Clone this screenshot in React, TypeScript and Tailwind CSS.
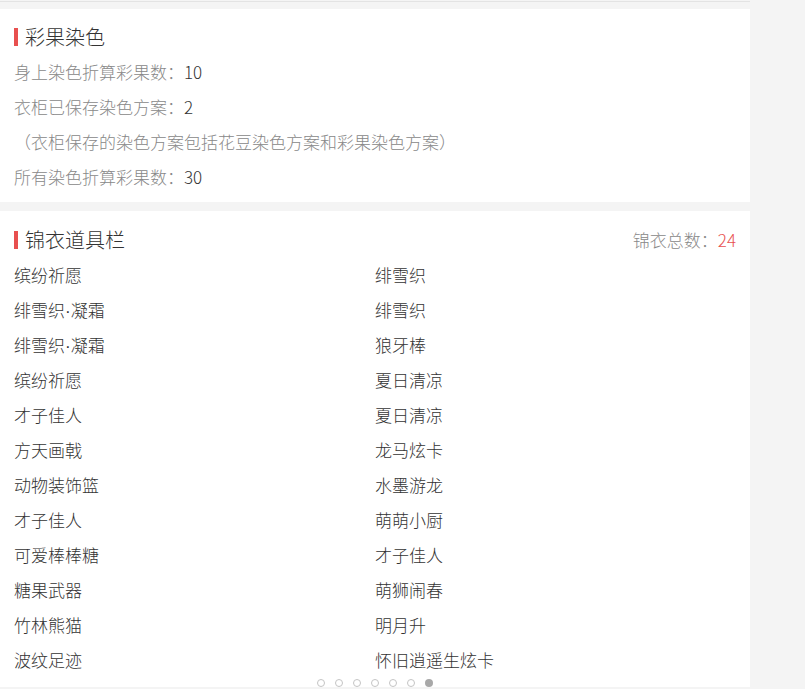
import React from "react";

const font = {
  fontFamily: '"Microsoft YaHei", "Noto Sans CJK SC", "Noto Sans", sans-serif',
};

const leftItems = [
  "缤纷祈愿",
  "绯雪织·凝霜",
  "绯雪织·凝霜",
  "缤纷祈愿",
  "才子佳人",
  "方天画戟",
  "动物装饰篮",
  "才子佳人",
  "可爱棒棒糖",
  "糖果武器",
  "竹林熊猫",
  "波纹足迹",
];

const rightItems = [
  "绯雪织",
  "绯雪织",
  "狼牙棒",
  "夏日清凉",
  "夏日清凉",
  "龙马炫卡",
  "水墨游龙",
  "萌萌小厨",
  "才子佳人",
  "萌狮闹春",
  "明月升",
  "怀旧逍遥生炫卡",
];

// Latin middle dot is narrow; the CJK font draws it full width.
function ItemName({ name }: { name: string }) {
  const parts = name.split("·");
  return (
    <>
      {parts.map((p, i) => (
        <React.Fragment key={i}>
          {i > 0 && <span style={{ fontFamily: '"Liberation Sans", sans-serif' }}>·</span>}
          {p}
        </React.Fragment>
      ))}
    </>
  );
}

function SectionTitle({ children }: { children: React.ReactNode }) {
  return (
    <div className="flex items-center h-[35px]">
      <span className="w-[4px] h-[18px] bg-[#e8504f] mr-[7px]" />
      <span className="text-[20px] font-light text-[#333]">{children}</span>
    </div>
  );
}

function StatLine({ label, value }: { label: string; value?: string }) {
  return (
    <div className="h-[35px] leading-[35px] text-[17px] font-light text-[#888]">
      {label}
      {value && <span className="text-[#333]">{value}</span>}
    </div>
  );
}

export default function App() {
  const rows = leftItems.map((l, i) => [l, rightItems[i]]);
  return (
    <div className="w-[805px] h-[689px] bg-[#f4f4f4] overflow-hidden" style={font}>
      <div className="w-[750px] pt-px">
        <div className="h-px bg-[#e3e3e3]" />
        <div className="h-[7px]" />

        {/* dye summary */}
        <section className="bg-white px-[14px] pt-[10px] pb-[8px]">
          <SectionTitle>彩果染色</SectionTitle>
          <StatLine label="身上染色折算彩果数：" value="10" />
          <StatLine label="衣柜已保存染色方案：" value="2" />
          <StatLine label="（衣柜保存的染色方案包括花豆染色方案和彩果染色方案）" />
          <StatLine label="所有染色折算彩果数：" value="30" />
        </section>

        <div className="h-[9px]" />

        {/* item bar */}
        <section className="relative bg-white px-[14px] pt-[11px] pb-[10px]">
          <div className="flex items-center justify-between">
            <SectionTitle>锦衣道具栏</SectionTitle>
            <div className="text-[17px] font-light text-[#888]">
              锦衣总数：<span className="text-[#e8504f]">24</span>
            </div>
          </div>
          <div className="grid grid-cols-2 font-light">
            {rows.map(([l, r], i) => (
              <React.Fragment key={i}>
                <div className="h-[35px] leading-[35px] text-[17px] text-[#333]">
                  <ItemName name={l} />
                </div>
                <div className="h-[35px] leading-[35px] text-[17px] text-[#333]">
                  <ItemName name={r} />
                </div>
              </React.Fragment>
            ))}
          </div>
          <div className="absolute left-0 right-0 bottom-0 flex justify-center gap-[10px]">
            {[0, 1, 2, 3, 4, 5].map((d) => (
              <span
                key={d}
                className="w-[8px] h-[8px] rounded-full border border-[#c4c4c4] bg-white"
              />
            ))}
            <span className="w-[8px] h-[8px] rounded-full bg-[#a8a8a8]" />
          </div>
        </section>
      </div>
    </div>
  );
}
